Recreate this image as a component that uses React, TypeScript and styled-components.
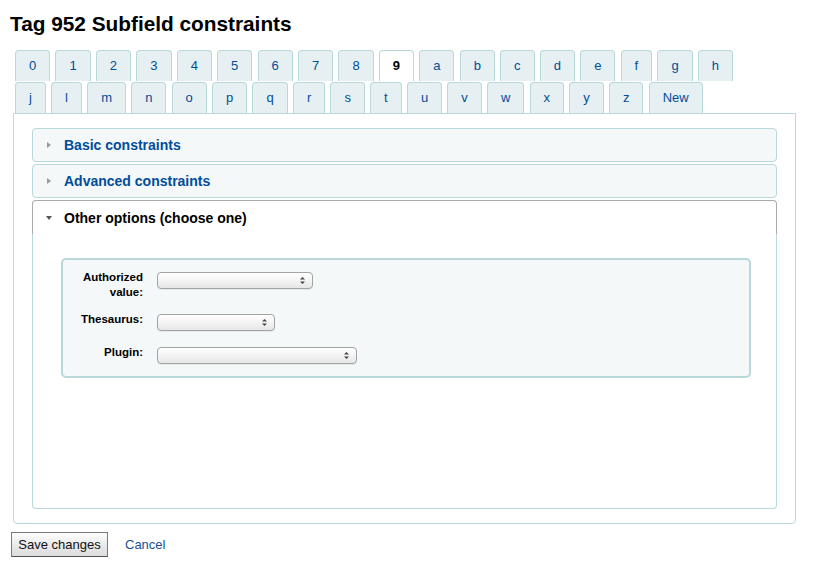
import React from 'react';
import styled, { createGlobalStyle } from 'styled-components';

const GlobalStyle = createGlobalStyle`
  html, body { margin: 0; padding: 0; background: #fff; }
  body { font-family: "Liberation Sans", Arial, Helvetica, sans-serif; color: #000; }
  * { box-sizing: border-box; }
`;

const Page = styled.div`
  padding: 10px;
`;

const Title = styled.h1`
  margin: 2px 0 14px;
  font-size: 20.8px;
  line-height: 24px;
  font-weight: bold;
`;

const TabsArea = styled.div`
  width: 783px;
  margin-left: 3px;
`;

const TabRow = styled.ul`
  list-style: none;
  margin: 0;
  padding: 0 0 0 2px;
  display: flex;
  & + & {
    margin-top: 1px;
  }
`;

const Tab = styled.li<{ $active?: boolean }>`
  margin-right: 5.2px;
  height: 31px;
  line-height: 30px;
  padding: 0 13px;
  border: 1px solid #b9d8d9;
  border-bottom: none;
  border-radius: 4px 4px 0 0;
  background: ${(p) => (p.$active ? '#ffffff' : '#e6f0f2')};
  color: ${(p) => (p.$active ? '#000' : '#004d99')};
  font-weight: ${(p) => (p.$active ? 'bold' : 'normal')};
  font-size: 13px;
  white-space: nowrap;
`;

const Panel = styled.div`
  border: 1px solid #b9d8d9;
  border-radius: 0 0 4px 4px;
  padding: 14px 18px;
`;

const Header = styled.div<{ $open?: boolean }>`
  display: flex;
  align-items: center;
  height: 34px;
  margin-top: 2px;
  padding-left: 12px;
  border: 1px solid ${(p) => (p.$open ? '#aaaaaa' : '#b9d8d9')};
  border-bottom: ${(p) => (p.$open ? 'none' : '1px solid #b9d8d9')};
  border-radius: ${(p) => (p.$open ? '4px 4px 0 0' : '4px')};
  background: ${(p) => (p.$open ? '#ffffff' : '#f4f8f9')};
  color: ${(p) => (p.$open ? '#000' : '#004d99')};
  font-size: 14px;
  font-weight: bold;
  &:first-child {
    margin-top: 0;
  }
`;

const Caret = styled.span<{ $open?: boolean }>`
  display: flex;
  align-items: center;
  justify-content: center;
  width: 7px;
  margin-right: 12px;
  &::before {
    content: '';
    width: 0;
    height: 0;
    ${(p) =>
      p.$open
        ? 'border-left: 3.5px solid transparent; border-right: 3.5px solid transparent; border-top: 4px solid #555;'
        : 'border-top: 3.5px solid transparent; border-bottom: 3.5px solid transparent; border-left: 4px solid #999;'}
  }
`;

const Content = styled.div`
  height: 275px;
  border: 1px solid #b9d8d9;
  border-top: none;
  border-radius: 0 0 4px 4px;
  padding: 24px 25px 0 28px;
`;

const Fieldset = styled.fieldset`
  margin: 0;
  padding: 4px 0;
  border: 2px solid #b9d8d9;
  border-radius: 5px;
  background: #f4f8f9;
`;

const FieldList = styled.ol`
  list-style: none;
  margin: 0;
  padding: 0;
`;

const FieldRow = styled.li`
  display: flex;
  align-items: flex-start;
  padding: 6px 0;
`;

const Label = styled.label`
  width: 80px;
  margin-right: 14px;
  text-align: right;
  font-size: 11.5px;
  line-height: 15px;
  font-weight: bold;
  color: #000;
`;

const SelectWrap = styled.span`
  position: relative;
  display: inline-block;
  margin: 2px 0;
`;

const Select = styled.select<{ $w: number }>`
  appearance: none;
  -webkit-appearance: none;
  display: block;
  width: ${(p) => p.$w}px;
  height: 17px;
  margin: 0;
  padding: 0 14px 0 6px;
  border: 1px solid #a3a3a3;
  border-radius: 4px;
  background: linear-gradient(#ffffff, #f1f1f1 60%, #e6e6e6);
  box-shadow: 0 1px 0 rgba(0, 0, 0, 0.06);
  font-family: "Liberation Sans", Arial, sans-serif;
  font-size: 11px;
`;

const Arrows = styled.svg`
  position: absolute;
  right: 8px;
  top: 5px;
  pointer-events: none;
`;

const Actions = styled.div`
  display: flex;
  align-items: center;
  margin-top: 8px;
  margin-left: 1px;
`;

const Button = styled.button`
  width: 97px;
  height: 25px;
  padding: 0;
  border: 1px solid #7a7a7a;
  border-bottom-color: #555;
  border-radius: 0;
  background: linear-gradient(#fdfdfd, #e9e9e9 55%, #dcdcdc);
  font-family: "Liberation Sans", Arial, sans-serif;
  font-size: 13px;
  color: #111;
`;

const CancelLink = styled.a`
  margin-left: 17px;
  font-size: 13px;
  color: #1a4f94;
  text-decoration: none;
`;

const row1 = ['0', '1', '2', '3', '4', '5', '6', '7', '8', '9', 'a', 'b', 'c', 'd', 'e', 'f', 'g', 'h'];
const row2 = ['j', 'l', 'm', 'n', 'o', 'p', 'q', 'r', 's', 't', 'u', 'v', 'w', 'x', 'y', 'z', 'New'];

const SelectBox: React.FC<{ w: number; id: string }> = ({ w, id }) => (
  <SelectWrap>
    <Select $w={w} id={id}>
      <option value=""></option>
    </Select>
    <Arrows width="5" height="7" viewBox="0 0 5 7">
      <path d="M2.5 0 L5 2.6 L0 2.6 Z" fill="#444" />
      <path d="M0 4.4 L5 4.4 L2.5 7 Z" fill="#444" />
    </Arrows>
  </SelectWrap>
);

export default function App() {
  return (
    <>
      <GlobalStyle />
      <Page>
        <Title>Tag 952 Subfield constraints</Title>
        <TabsArea>
          <TabRow>
            {row1.map((t) => (
              <Tab key={t} $active={t === '9'}>
                {t}
              </Tab>
            ))}
          </TabRow>
          <TabRow>
            {row2.map((t) => (
              <Tab key={t}>{t}</Tab>
            ))}
          </TabRow>
          <Panel>
            <Header>
              <Caret />
              Basic constraints
            </Header>
            <Header>
              <Caret />
              Advanced constraints
            </Header>
            <Header $open>
              <Caret $open />
              Other options (choose one)
            </Header>
            <Content>
              <Fieldset>
                <FieldList>
                  <FieldRow>
                    <Label htmlFor="authval">Authorized value:</Label>
                    <SelectBox w={156} id="authval" />
                  </FieldRow>
                  <FieldRow>
                    <Label htmlFor="thes">Thesaurus:</Label>
                    <SelectBox w={118} id="thes" />
                  </FieldRow>
                  <FieldRow>
                    <Label htmlFor="plugin">Plugin:</Label>
                    <SelectBox w={200} id="plugin" />
                  </FieldRow>
                </FieldList>
              </Fieldset>
            </Content>
          </Panel>
        </TabsArea>
        <Actions>
          <Button type="button">Save changes</Button>
          <CancelLink href="#">Cancel</CancelLink>
        </Actions>
      </Page>
    </>
  );
}
